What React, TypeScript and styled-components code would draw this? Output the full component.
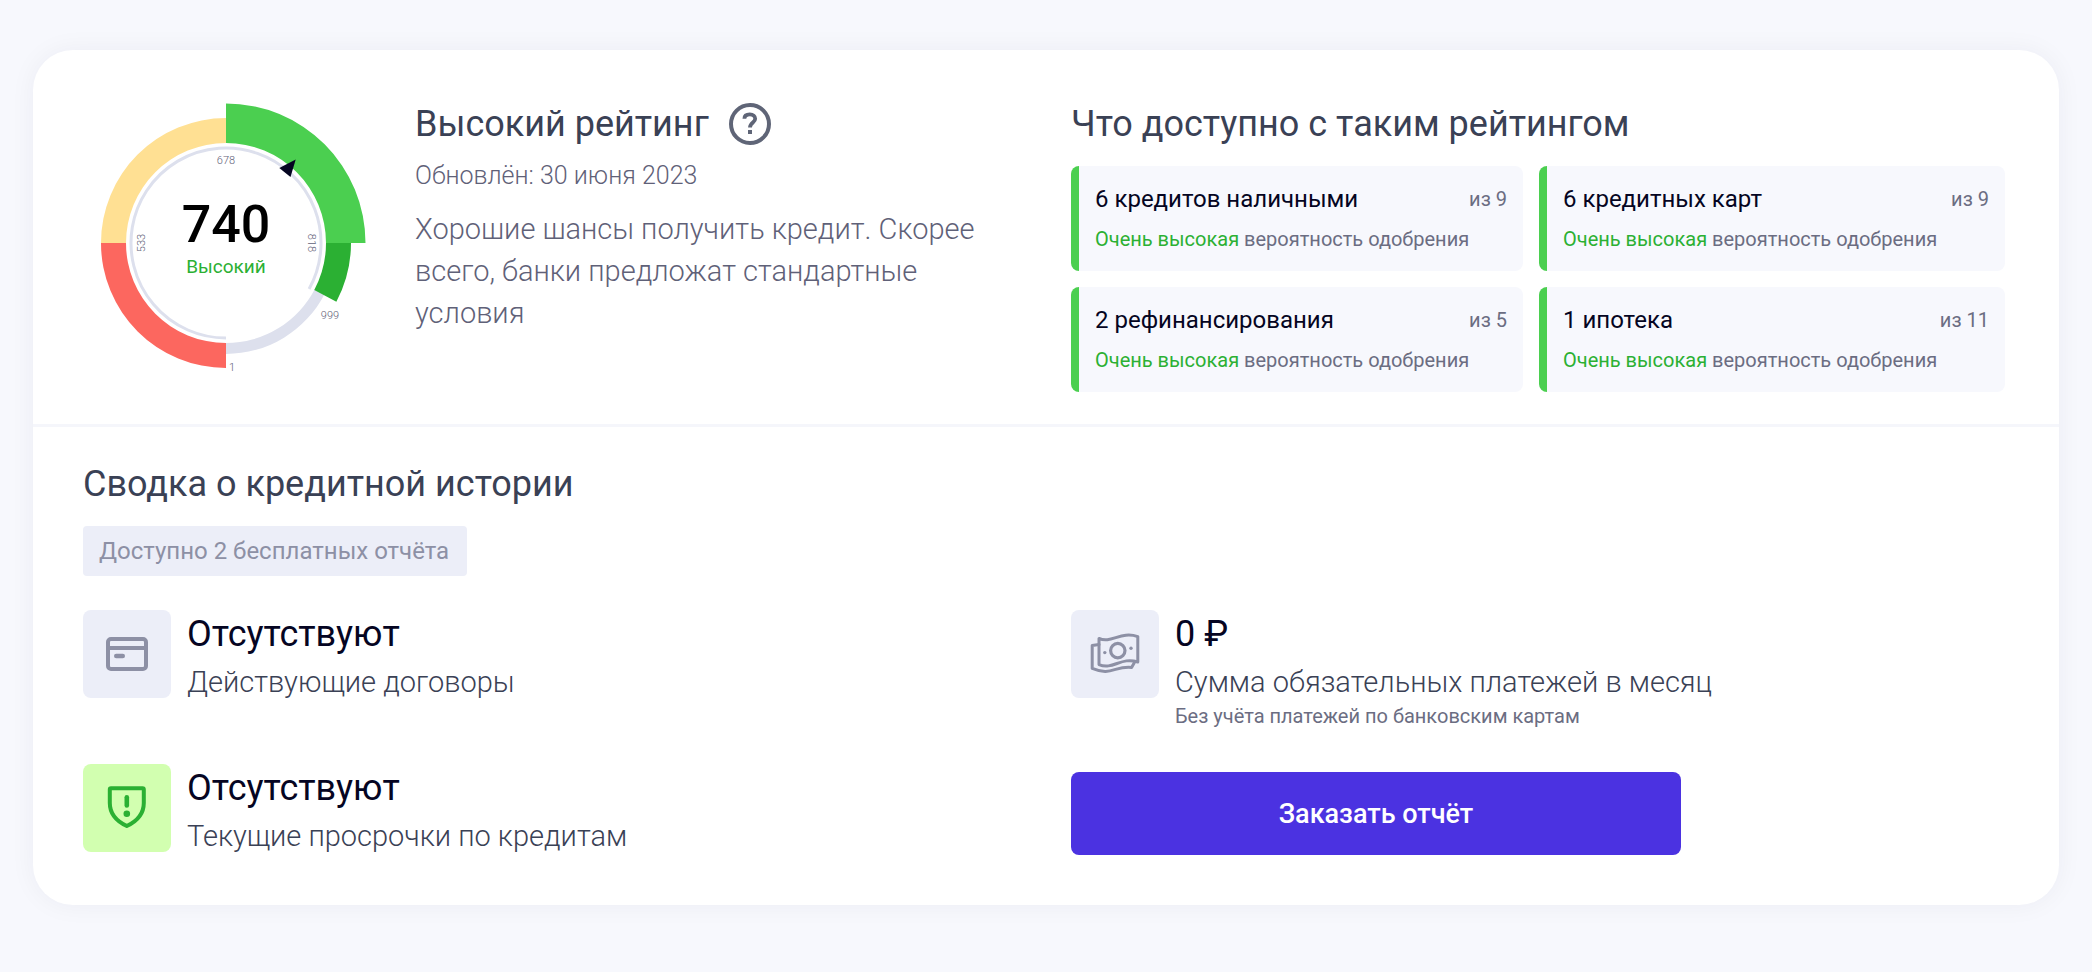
import React from 'react';
import styled, { createGlobalStyle } from 'styled-components';

const Global = createGlobalStyle`
  *, *::before, *::after { box-sizing: border-box; }
  body {
    margin: 0;
    background: #f7f8fd;
    color: #050522;
    font-family: Roboto, "Liberation Sans", sans-serif;
  }
  h2, p, ul { margin: 0; padding: 0; }
`;

const Page = styled.main`
  padding: 50px 33px 66px;
`;

const Card = styled.article`
  background: #fff;
  border-radius: 40px;
  box-shadow: 0 0 26px rgba(20, 20, 50, 0.05);
`;

const Top = styled.section`
  display: grid;
  grid-template-columns: 1fr 1fr;
  border-bottom: 3px solid #f5f6fb;
`;

const Rating = styled.div`
  display: flex;
  gap: 46px;
  padding: 50px 40px 32px 50px;
`;

const GaugeDrawing = styled.svg`
  flex: none;
  width: 286px;
  height: 286px;
`;

const ScaleLabel = styled.text`
  font-size: 11px;
  font-weight: 300;
  text-anchor: middle;
  fill: #5f6178;
`;

const Score = styled.text`
  font-size: 52px;
  font-weight: 500;
  text-anchor: middle;
  fill: #000;
`;

const ScoreLevel = styled.text`
  font-size: 19px;
  text-anchor: middle;
  fill: #2bb033;
`;

const RatingText = styled.div`
  flex: 1;
  min-width: 0;
`;

const TitleRow = styled.div`
  display: flex;
  align-items: center;
  gap: 20px;
`;

const Title = styled.h2`
  font-size: 36px;
  line-height: 48px;
  font-weight: 400;
  color: #3a4155;
`;

const HelpButton = styled.button`
  display: flex;
  padding: 0;
  border: 0;
  background: none;
  color: #5f6577;
  cursor: pointer;
`;

const Updated = styled.p`
  margin: 12px 0 16px;
  font-size: 25px;
  line-height: 32px;
  font-weight: 300;
  color: #5f6178;
`;

const Description = styled.p`
  font-size: 29px;
  line-height: 42px;
  font-weight: 300;
  color: #5f6178;
`;

const Available = styled.div`
  padding: 50px 54px 32px 25px;
`;

const Offers = styled.ul`
  display: grid;
  grid-template-columns: 452fr 466fr;
  gap: 16px;
  margin-top: 18px;
  list-style: none;
`;

const Offer = styled.li`
  padding: 17px 16px 16px;
  border-left: 8px solid #4bcf50;
  border-radius: 8px;
  background: #f7f8fd;
`;

const OfferHead = styled.div`
  display: flex;
  justify-content: space-between;
  font-size: 24px;
  line-height: 32px;
`;

const Small = styled.p`
  font-size: 20px;
  color: #6b6d82;
`;

const OfferTotal = styled(Small).attrs({ as: 'span' })``;

const OfferChance = styled(Small)`
  margin-top: 8px;
  line-height: 32px;
`;

const Accent = styled.span`
  color: #2bb033;
`;

const Summary = styled.section`
  padding: 33px 0 45px;
`;

const SummaryHead = styled.div`
  padding: 0 50px;
`;

const Badge = styled.p`
  width: fit-content;
  margin: 18px 0 34px;
  padding: 0 18px 0 16px;
  border-radius: 4px;
  background: #eceef8;
  font-size: 24px;
  line-height: 50px;
  color: #8d90a5;
`;

const Facts = styled.div`
  display: grid;
  grid-template-columns: 1fr 1fr;
  row-gap: 38px;
`;

const Cell = styled.div<{ $side: 'left' | 'right' }>`
  display: flex;
  align-items: flex-start;
  gap: 16px;
  padding-left: ${(p) => (p.$side === 'left' ? 50 : 25)}px;
`;

const IconBox = styled.span<{ $good?: boolean }>`
  flex: none;
  width: 88px;
  height: 88px;
  border-radius: 8px;
  background: ${(p) => (p.$good ? '#d2ffb0' : '#eceef8')};
  color: ${(p) => (p.$good ? '#2bb033' : '#8d90a5')};
`;

const Value = styled.p`
  font-size: 36px;
  line-height: 48px;
`;

const Label = styled.p`
  font-size: 29px;
  line-height: 48px;
  font-weight: 300;
  color: #3a4155;
`;

const Note = styled(Small)`
  line-height: 20px;
`;

const OrderButton = styled.button`
  width: 610px;
  max-width: 100%;
  height: 83px;
  margin-top: 8px;
  border: 0;
  border-radius: 8px;
  background: #4b32e1;
  color: #fff;
  font-family: inherit;
  font-size: 27px;
  font-weight: 500;
  cursor: pointer;
`;

/* Angles run clockwise in degrees from twelve o'clock. */
const point = (r: number, deg: number) => {
  const a = ((deg - 90) * Math.PI) / 180;
  return `${(r * Math.cos(a)).toFixed(2)} ${(r * Math.sin(a)).toFixed(2)}`;
};

const sector = (inner: number, outer: number, from: number, to: number) =>
  `M${point(outer, from)} A${outer} ${outer} 0 0 1 ${point(outer, to)} ` +
  `L${point(inner, to)} A${inner} ${inner} 0 0 0 ${point(inner, from)} Z`;

function Gauge() {
  return (
    <GaugeDrawing viewBox="-143 -143 286 286">
      <path d={sector(100, 125, 180, 270)} fill="#fc675f" />
      <path d={sector(100, 125, 270, 360)} fill="#ffe093" />
      <path d={sector(100, 111, 117, 180)} fill="#dde0ed" />
      <path d={sector(100, 125, 90, 118)} fill="#2bb033" />
      <path d={sector(100, 139.5, 0, 90)} fill="#4bcf50" />
      <path
        d={`M${point(95, 180)} A95 95 0 1 1 ${point(95, 119)}`}
        fill="none"
        stroke="#dde0ed"
        strokeWidth="3"
      />
      <path d="M53.3 -75 L69.7 -83.5 L64.5 -66 Z" fill="#050522" />
      <ScaleLabel x="0" y="-79">678</ScaleLabel>
      <ScaleLabel transform="translate(-81 0) rotate(-90)">533</ScaleLabel>
      <ScaleLabel transform="translate(82 0) rotate(90)">818</ScaleLabel>
      <ScaleLabel x="104" y="76">999</ScaleLabel>
      <ScaleLabel x="6" y="128">1</ScaleLabel>
      <Score x="0" y="-1">740</Score>
      <ScoreLevel x="0" y="30">Высокий</ScoreLevel>
    </GaugeDrawing>
  );
}

const HelpIcon = () => (
  <svg width="42" height="42" viewBox="0 0 42 42" fill="none" stroke="currentColor">
    <circle cx="21" cy="21" r="19" strokeWidth="4" />
    <path
      d="M15.4 15.8C15.4 12.8 17.6 11.4 20.8 11.4C24.2 11.4 26.2 13.2 26.2 15.8C26.2 19.6 21 19.4 21 24.6"
      strokeWidth="3.8"
    />
    <rect x="19" y="27" width="4" height="4" fill="currentColor" stroke="none" />
  </svg>
);

const CardIcon = () => (
  <svg width="88" height="88" viewBox="0 0 88 88" fill="none" stroke="currentColor" strokeWidth="4">
    <rect x="25" y="29" width="38" height="30" rx="3" />
    <path d="M25 38H63" />
    <path d="M33.3 46H39.7" strokeLinecap="round" strokeWidth="4.6" />
  </svg>
);

const ShieldIcon = () => (
  <svg width="88" height="88" viewBox="0 0 88 88" fill="none" stroke="currentColor" strokeWidth="4">
    <path
      d="M28 24.2H59.6Q60.8 24.2 60.8 25.4V39C60.8 50 54.5 57 43.8 62C33.1 57 26.8 50 26.8 39V25.4Q26.8 24.2 28 24.2Z"
      strokeLinejoin="round"
    />
    <path d="M43.8 33.2V41.4" strokeLinecap="round" strokeWidth="4.6" />
    <circle cx="43.8" cy="49.8" r="3.3" fill="currentColor" stroke="none" />
  </svg>
);

const MoneyIcon = () => (
  <svg
    width="88"
    height="88"
    viewBox="0 0 88 88"
    fill="none"
    stroke="currentColor"
    strokeWidth="3"
    strokeLinejoin="round"
    strokeLinecap="round"
  >
    <path d="M28 28.4C40 34 50 20.6 66.8 26.6V52C50 46.4 42 60.4 28 54.6Z" />
    <path d="M28 34.4L21.2 35.6V58.4C40 66.4 44 55.6 60.6 57.4L63.4 52.4" />
    <circle cx="46.8" cy="40.6" r="7.2" strokeWidth="3.2" />
    <circle cx="33.8" cy="42.6" r="1.7" fill="currentColor" stroke="none" />
    <circle cx="60" cy="38.2" r="1.7" fill="currentColor" stroke="none" />
  </svg>
);

const offers = [
  { name: '6 кредитов наличными', total: 'из 9' },
  { name: '6 кредитных карт', total: 'из 9' },
  { name: '2 рефинансирования', total: 'из 5' },
  { name: '1 ипотека', total: 'из 11' },
];

export default function App() {
  return (
    <>
      <Global />
      <Page>
        <Card>
          <Top>
            <Rating>
              <Gauge />
              <RatingText>
                <TitleRow>
                  <Title id="rating-title">Высокий рейтинг</Title>
                  <HelpButton type="button" aria-labelledby="rating-title">
                    <HelpIcon />
                  </HelpButton>
                </TitleRow>
                <Updated>Обновлён: 30 июня 2023</Updated>
                <Description>
                  Хорошие шансы получить кредит. Скорее всего, банки предложат стандартные условия
                </Description>
              </RatingText>
            </Rating>
            <Available>
              <Title>Что доступно с таким рейтингом</Title>
              <Offers>
                {offers.map((offer) => (
                  <Offer key={offer.name}>
                    <OfferHead>
                      <span>{offer.name}</span>
                      <OfferTotal>{offer.total}</OfferTotal>
                    </OfferHead>
                    <OfferChance>
                      <Accent>Очень высокая</Accent> вероятность одобрения
                    </OfferChance>
                  </Offer>
                ))}
              </Offers>
            </Available>
          </Top>

          <Summary>
            <SummaryHead>
              <Title>Сводка о кредитной истории</Title>
              <Badge>Доступно 2 бесплатных отчёта</Badge>
            </SummaryHead>
            <Facts>
              <Cell $side="left">
                <IconBox>
                  <CardIcon />
                </IconBox>
                <div>
                  <Value>Отсутствуют</Value>
                  <Label>Действующие договоры</Label>
                </div>
              </Cell>
              <Cell $side="right">
                <IconBox>
                  <MoneyIcon />
                </IconBox>
                <div>
                  <Value>0 ₽</Value>
                  <Label>Сумма обязательных платежей в месяц</Label>
                  <Note>Без учёта платежей по банковским картам</Note>
                </div>
              </Cell>
              <Cell $side="left">
                <IconBox $good>
                  <ShieldIcon />
                </IconBox>
                <div>
                  <Value>Отсутствуют</Value>
                  <Label>Текущие просрочки по кредитам</Label>
                </div>
              </Cell>
              <Cell $side="right">
                <OrderButton type="button">Заказать отчёт</OrderButton>
              </Cell>
            </Facts>
          </Summary>
        </Card>
      </Page>
    </>
  );
}
